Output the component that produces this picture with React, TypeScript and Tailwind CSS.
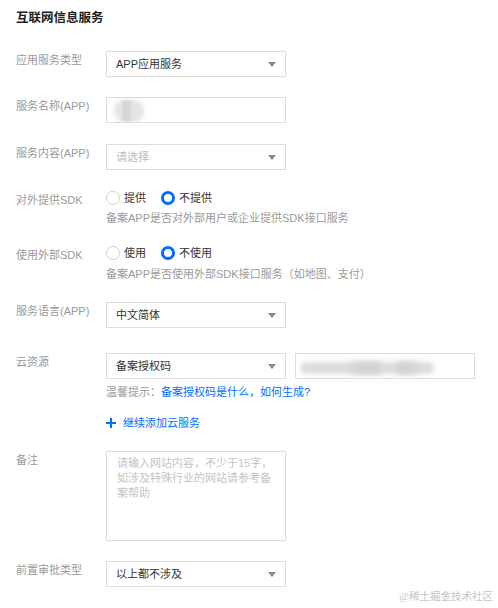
import React from 'react';

const font = { fontFamily: '"Liberation Sans", "Noto Sans CJK SC", sans-serif' };

function Arrow() {
  return (
    <svg width="8" height="5" viewBox="0 0 8 5" className="shrink-0">
      <path d="M0 0h8L4 5z" fill="#888" />
    </svg>
  );
}

function Select({ value, placeholder }: { value?: string; placeholder?: string }) {
  return (
    <div className="w-[180px] h-[26px] border border-[#dcdcdc] bg-white flex items-center justify-between pl-[9px] pr-[9px]">
      <span className={value ? 'text-[#333]' : 'text-[#bbb]'}>{value ?? placeholder}</span>
      <Arrow />
    </div>
  );
}

function Radio({ checked, label }: { checked?: boolean; label: string }) {
  return (
    <label className="flex items-center gap-[4px]">
      {checked ? (
        <span className="w-[14px] h-[14px] rounded-full border-[3px] border-[#006eff] bg-white" />
      ) : (
        <span className="w-[14px] h-[14px] rounded-full border border-[#cfcfcf] bg-white" />
      )}
      <span className="text-[#333]">{label}</span>
    </label>
  );
}

function Label({ children }: { children: React.ReactNode }) {
  return <div className="w-[90px] shrink-0 text-[#999] leading-[18px]">{children}</div>;
}

export default function App() {
  return (
    <div className="relative w-[498px] h-[608px] bg-white pl-4 text-[11px] leading-[18px]" style={font}>
      <div className="pt-[8px] text-[12.5px] leading-[20px] font-bold text-[#222]">互联网信息服务</div>

      <div className="flex mt-[23px]">
        <Label>应用服务类型</Label>
        <Select value="APP应用服务" />
      </div>

      <div className="flex mt-[20px]">
        <Label>服务名称(APP)</Label>
        <div className="relative w-[180px] h-[26px] border border-[#dcdcdc] bg-white overflow-hidden">
          <div className="absolute left-[7px] top-[2px] w-[30px] h-[22px] rounded-full bg-[#e4e4e4] blur-[2px]" />
          <div className="absolute left-[15px] top-[3px] w-[9px] h-[20px] bg-[#d6d6d6] blur-[1px]" />
        </div>
      </div>

      <div className="flex mt-[21px]">
        <Label>服务内容(APP)</Label>
        <Select placeholder="请选择" />
      </div>

      <div className="flex mt-[19px] items-start">
        <Label><span className="block pt-[2px]">对外提供SDK</span></Label>
        <div className="flex flex-col">
          <div className="flex items-center gap-[15px] h-[18px]">
            <Radio label="提供" />
            <Radio checked label="不提供" />
          </div>
          <div className="mt-[2px] text-[#999]">备案APP是否对外部用户或企业提供SDK接口服务</div>
        </div>
      </div>

      <div className="flex mt-[17px] items-start">
        <Label><span className="block pt-[2px]">使用外部SDK</span></Label>
        <div className="flex flex-col">
          <div className="flex items-center gap-[15px] h-[18px]">
            <Radio label="使用" />
            <Radio checked label="不使用" />
          </div>
          <div className="mt-[3px] text-[#999]">备案APP是否使用外部SDK接口服务（如地图、支付）</div>
        </div>
      </div>

      <div className="flex mt-[19px]">
        <Label>服务语言(APP)</Label>
        <Select value="中文简体" />
      </div>

      <div className="flex mt-[25px]">
        <Label>云资源</Label>
        <div className="flex flex-col">
          <div className="flex gap-[9px]">
            <Select value="备案授权码" />
            <div className="relative w-[180px] h-[26px] border border-[#dcdcdc] bg-white overflow-hidden">
              <div className="absolute left-[5px] top-[8px] w-[133px] h-[12px] rounded-[4px] bg-[#dedede] blur-[2px]" />
              <div className="absolute left-[55px] top-[8px] w-[30px] h-[12px] bg-[#d2d2d2] blur-[3px]" />
              <div className="absolute left-[100px] top-[8px] w-[20px] h-[12px] bg-[#d2d2d2] blur-[3px]" />
            </div>
          </div>
          <div className="mt-[4px] text-[#999]">
            温馨提示：<span className="text-[#006eff]">备案授权码是什么，如何生成?</span>
          </div>
          <div className="mt-[13px] flex items-center gap-[7px] text-[#006eff]">
            <svg width="10" height="10" viewBox="0 0 10 10">
              <path d="M5 0v10M0 5h10" stroke="#006eff" strokeWidth="2" />
            </svg>
            <span>继续添加云服务</span>
          </div>
        </div>
      </div>

      <div className="flex mt-[19px]">
        <Label>备注</Label>
        <div className="w-[180px] h-[90px] border border-[#dcdcdc] bg-white pl-[10px] pr-[6px] pt-[4px] text-[#c4c4c4] leading-[15px] whitespace-nowrap">
          <div>请输入网站内容，不少于15字，</div>
          <div>如涉及特殊行业的网站请参考备</div>
          <div>案帮助</div>
        </div>
      </div>

      <div className="flex mt-[20px]">
        <Label>前置审批类型</Label>
        <Select value="以上都不涉及" />
      </div>

      <div
        className="absolute right-[5px] bottom-[2px] text-[10.5px] text-[#c4c4c4]"
        style={{ fontFamily: '"Liberation Serif", "Noto Sans CJK SC", serif' }}
      >
        @稀土掘金技术社区
      </div>
    </div>
  );
}
